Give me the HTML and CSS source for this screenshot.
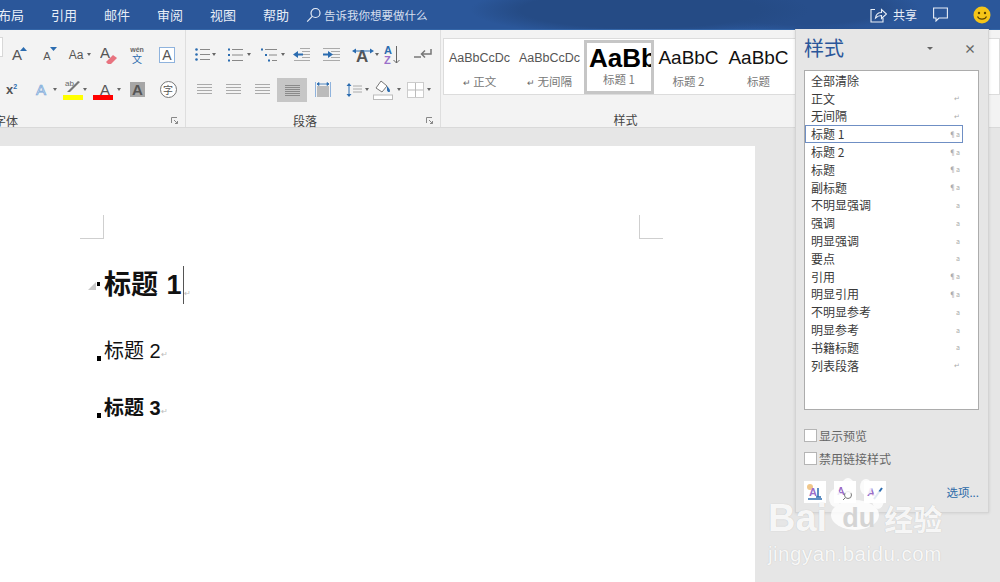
FILE: index.html
```html
<!DOCTYPE html>
<html lang="zh-CN">
<head>
    <meta charset="UTF-8">
    <title>样式</title>
    <link rel="stylesheet" href="styles.css">
</head>
<body>
    <div class="titlebar">
        <nav class="menu">
            <span>布局</span><span>引用</span><span>邮件</span><span>审阅</span><span>视图</span><span>帮助</span>
        </nav>
        <div class="tell-me">
            <svg width="15" height="16" viewBox="0 0 15 16" fill="none" stroke="#e8eef7" stroke-width="1.2"><circle cx="9.5" cy="6" r="4.5"/><path d="M6.2 9.4 1.2 14.6"/></svg>
            <span>告诉我你想要做什么</span>
        </div>
        <div class="title-right">
            <svg width="17" height="16" viewBox="0 0 17 16" fill="none" stroke="#e8eef7" stroke-width="1.1"><path d="M5 2.5H1v12.5h12v-4"/><path d="M5.5 11c.5-3.5 3-5.5 6-5.5V2.500l5 4.500-5 4.500V8.500c-2.500 0-4.500 1-6 2.500z"/></svg>
            <span class="share">共享</span>
            <svg class="comment" width="15" height="15" viewBox="0 0 15 15" fill="none" stroke="#e8eef7" stroke-width="1.1"><path d="M.6 1h13.800v10H6l-3 3v-3H.6z"/></svg>
            <svg class="smiley" width="18" height="18" viewBox="0 0 18 18"><circle cx="9" cy="9" r="8.500" fill="#f5c518"/><circle cx="6" cy="7" r="1.200" fill="#5a4300"/><circle cx="12" cy="7" r="1.200" fill="#5a4300"/><path d="M4.500 10.500c1.500 3.500 7.500 3.500 9 0" fill="none" stroke="#5a4300" stroke-width="1.100"/></svg>
        </div>
    </div>

    <div class="ribbon">
        <section class="group group-font">
            <div class="row">
                <i class="size-box"></i>
                <div class="cell"><span class="ltr">A</span><svg class="up" width="7" height="4" viewBox="0 0 7 4"><path d="M0 4 3.500 0 7 4z" fill="#2b6cb0"/></svg></div>
                <div class="cell"><span class="ltr small">A</span><svg class="up" width="7" height="4" viewBox="0 0 7 4"><path d="M0 0 3.500 4 7 0z" fill="#2b6cb0"/></svg></div>
                <div class="cell"><span class="aa">Aa</span><b class="caret"></b></div>
                <div class="cell">
                    <svg class="eraser" width="20" height="20" viewBox="0 0 20 20"><text x="0" y="13" class="svg-a">A</text><path d="M6 17l7-7 4 3-6 6H8z" fill="#e8737f"/></svg>
                </div>
                <div class="cell wen"><span class="wen-top">wén</span><span class="wen-bottom">文</span></div>
                <div class="cell"><span class="ltr boxed">A</span></div>
            </div>
            <div class="row row-font2">
                <div class="cell w25"><span class="sup">x<sup>2</sup></span></div>
                <div class="cell w34"><span class="ltr outline">A</span><b class="caret"></b></div>
                <div class="cell w30">
                    <span class="swatch-letter">ab</span><svg class="pen" width="14" height="13" viewBox="0 0 14 13"><path d="M1 12 12 1l2 1L4 12z" fill="#777"/></svg><i class="bar bar-yellow"></i><b class="caret"></b>
                </div>
                <div class="cell w34"><span class="ltr">A</span><i class="bar bar-red"></i><b class="caret"></b></div>
                <div class="cell w31"><span class="ltr shaded">A</span></div>
                <div class="cell"><span class="circled">字</span></div>
            </div>
            <div class="group-label">
                <span class="label-clipped">字体</span>
                <svg class="launcher" width="7" height="7" viewBox="0 0 7 7" fill="none" stroke="#888"><path d="M.5 6V.5H6"/><path d="M3 3l3.500 3.500M6.500 4v2.500H4"/></svg>
            </div>
        </section>

        <section class="group group-para">
            <div class="row para1">
                <div class="cell w30">
                    <svg width="15" height="13" viewBox="0 0 15 13"><g fill="#2b6cb0"><circle cx="1.500" cy="1.500" r="1.300"/><circle cx="1.500" cy="6.500" r="1.300"/><circle cx="1.500" cy="11.500" r="1.300"/></g><path d="M5 1.500h10M5 6.500h10M5 11.500h10" stroke="#888"/></svg><b class="caret"></b>
                </div>
                <div class="cell w35">
                    <svg width="16" height="14" viewBox="0 0 16 14"><path d="M1 1.500h2M1 7h2M1 12.500h2" stroke="#2b6cb0" stroke-width="2"/><path d="M5 1.500h11M5 7h11M5 12.500h11" stroke="#888"/></svg><b class="caret"></b>
                </div>
                <div class="cell w34">
                    <svg width="16" height="14" viewBox="0 0 16 14"><path d="M0 1.500h2M4 7h2M7 12.500h2" stroke="#2b6cb0" stroke-width="2"/><path d="M4 1.500h12M8 7h8M11 12.500h5" stroke="#888"/></svg><b class="caret"></b>
                </div>
                <div class="cell w31">
                    <svg width="17" height="13" viewBox="0 0 17 13"><path d="M7 1h10M9 4h8M9 7h8M9 10h8M1 13h16" stroke="#aaa" transform="translate(0 -.5)"/><path d="M0 6.500 5 3v2.500h5v2H5V10z" fill="#2b6cb0"/></svg>
                </div>
                <div class="cell w29">
                    <svg width="17" height="13" viewBox="0 0 17 13"><path d="M0 1h17M8 4h9M8 7h9M8 10h9M0 13h17" stroke="#aaa" transform="translate(0 -.5)"/><path d="M10 6.500 5 3v2.500H0v2h5V10z" fill="#2b6cb0"/></svg>
                </div>
                <div class="cell w34">
                    <svg width="22" height="14" viewBox="0 0 22 14"><text x="4" y="14" class="svg-a big">A</text><path d="M0 3l4-2.500v5zM22 3 18 .5v5z" fill="#2b6cb0"/><path d="M3 3h16" stroke="#2b6cb0"/></svg><b class="caret"></b>
                </div>
                <div class="cell w24">
                    <svg width="16" height="20" viewBox="0 0 16 20"><text x="0" y="9" class="svg-sort blue">A</text><text x="0" y="19" class="svg-sort purple">Z</text><path d="M12.500 1v17M9.500 15l3 3 3-3" fill="none" stroke="#666"/></svg>
                </div>
                <div class="cell w38">
                    <svg width="18" height="14" viewBox="0 0 18 14" fill="none" stroke="#777" stroke-width="1.500"><path d="M17 1v5H8M11 2.500 7.500 6 11 9.500"/><path d="M0 9h7"/></svg>
                </div>
            </div>
            <div class="row para2">
                <div class="cell w29"><i class="lines left"></i></div>
                <div class="cell w29"><i class="lines center"></i></div>
                <div class="cell w29"><i class="lines right"></i></div>
                <div class="cell w30 selected"><i class="lines dark"></i></div>
                <div class="cell w31">
                    <svg width="16" height="15" viewBox="0 0 16 15"><path d="M.5 0v15M15.500 0v15" stroke="#8fb3dd"/><rect x="2" y="4" width="12" height="11" fill="#bbb"/><path d="M2 2h12M2 2l2-1.500v3zM14 2l-2-1.500v3z" stroke="#2b6cb0" fill="#2b6cb0" stroke-width=".8"/></svg>
                </div>
                <div class="cell w32">
                    <svg width="16" height="16" viewBox="0 0 16 16"><path d="M3 1 .5 4h5zM3 15 .5 12h5z" fill="#2b6cb0"/><path d="M3 3v10" stroke="#2b6cb0"/><path d="M7 4h9M7 7h9M7 10h9" stroke="#aaa"/></svg><b class="caret"></b>
                </div>
                <div class="cell w32 nudge-fill">
                    <svg width="20" height="20" viewBox="0 0 20 20"><path d="M8 1 14 6l-5 6-6-4z" fill="#fff" stroke="#777"/><path d="M14 6c1 1 3 3 3 5s-3 1-3-1z" fill="#2b6cb0"/><rect x=".5" y="15" width="19" height="4.500" fill="#fff" stroke="#bbb"/></svg><b class="caret"></b>
                </div>
                <div class="cell w30 nudge-table">
                    <svg width="17" height="16" viewBox="0 0 17 16"><rect x=".5" y=".5" width="16" height="15" fill="#fff" stroke="#ccc"/><path d="M8.500 1v14M1 8h15" stroke="#bbb"/></svg><b class="caret"></b>
                </div>
            </div>
            <div class="group-label para-label">
                <span class="label-center">段落</span>
                <svg class="launcher" width="7" height="7" viewBox="0 0 7 7" fill="none" stroke="#888"><path d="M.5 6V.5H6"/><path d="M3 3l3.500 3.500M6.500 4v2.500H4"/></svg>
            </div>
        </section>

        <section class="group group-styles">
            <div class="gallery">
                <div class="style-item"><div class="preview">AaBbCcDc</div><div class="style-name"><em>↵</em> 正文</div></div>
                <div class="style-item"><div class="preview">AaBbCcDc</div><div class="style-name"><em>↵</em> 无间隔</div></div>
                <div class="style-item current"><div class="preview h1">AaBb</div><div class="style-name">标题 1</div></div>
                <div class="style-item"><div class="preview h2">AaBbC</div><div class="style-name">标题 2</div></div>
                <div class="style-item"><div class="preview h2">AaBbC</div><div class="style-name">标题</div></div>
            </div>
            <div class="group-label styles-label"><span class="label-center">样式</span></div>
        </section>
    </div>

    <main class="workspace">
        <div class="page">
            <div class="crop-row">
                <i class="crop crop-left"></i>
                <i class="crop crop-right"></i>
            </div>
            <div class="heading heading-1">
                <span class="gutter"><svg class="collapse" width="8" height="8" viewBox="0 0 8 8"><path d="M8 0v8H0z" fill="#c9c9c9"/></svg><i class="dot"></i></span>
                <h1>标题 1</h1><i class="caret-line"></i><em class="pilcrow">↵</em>
            </div>
            <div class="heading heading-2">
                <span class="gutter"><i class="dot"></i></span>
                <h2>标题 2</h2><em class="pilcrow">↵</em>
            </div>
            <div class="heading heading-3">
                <span class="gutter"><i class="dot"></i></span>
                <h3>标题 3</h3><em class="pilcrow">↵</em>
            </div>
        </div>
    </main>

    <aside class="styles-pane">
        <header class="pane-head">
            <span class="pane-title">样式</span>
            <b class="pane-drop"></b>
            <span class="pane-close">×</span>
        </header>
        <ul class="style-list">
            <li>全部清除</li>
            <li>正文<em>↵</em></li>
            <li>无间隔<em>↵</em></li>
            <li class="active">标题 1<em>¶a</em></li>
            <li>标题 2<em>¶a</em></li>
            <li>标题<em>¶a</em></li>
            <li>副标题<em>¶a</em></li>
            <li>不明显强调<em>a</em></li>
            <li>强调<em>a</em></li>
            <li>明显强调<em>a</em></li>
            <li>要点<em>a</em></li>
            <li>引用<em>¶a</em></li>
            <li>明显引用<em>¶a</em></li>
            <li>不明显参考<em>a</em></li>
            <li>明显参考<em>a</em></li>
            <li>书籍标题<em>a</em></li>
            <li>列表段落<em>↵</em></li>
        </ul>
        <label class="check"><i></i>显示预览</label>
        <label class="check"><i></i>禁用链接样式</label>
        <div class="pane-foot">
            <button class="pane-btn">
                <svg width="18" height="18" viewBox="0 0 18 18"><circle cx="4" cy="4" r="3" fill="#f0c68a"/><text x="3" y="13" class="svg-sort purple">A</text><path d="M12 5v9M10 14h5M2 16h14" stroke="#2b6cb0" stroke-width="1.500"/></svg>
            </button>
            <button class="pane-btn">
                <svg width="18" height="18" viewBox="0 0 18 18"><text x="1" y="12" class="svg-sort purple">A</text><circle cx="12" cy="12" r="3.500" fill="none" stroke="#777"/><path d="M9 15l-2 2" stroke="#777"/></svg>
            </button>
            <button class="pane-btn">
                <svg width="18" height="18" viewBox="0 0 18 18"><text x="1" y="13" class="svg-sort purple">A</text><path d="M8 16 16 5" stroke="#2b6cb0" stroke-width="2"/></svg>
            </button>
            <a class="options">选项...</a>
        </div>
    </aside>

    <div class="watermark">
        <svg class="paw" width="60" height="54" viewBox="0 0 60 54" fill="#fff"><ellipse cx="8" cy="20" rx="6" ry="9"/><ellipse cx="21" cy="8" rx="6" ry="8"/><ellipse cx="39" cy="9" rx="6" ry="8"/><ellipse cx="51" cy="22" rx="6" ry="9"/><ellipse cx="28" cy="37" rx="24" ry="15"/></svg>
        <div class="wm-main"><span class="wm-bai">Bai</span><span class="wm-du">du</span><span class="wm-cn">经验</span></div>
        <div class="wm-url">jingyan.baidu.com</div>
    </div>
</body>
</html>
```

FILE: styles.css
```css
* {
    box-sizing: border-box;
}
html, body {
    margin: 0;
    height: 582px;
    overflow: hidden;
}
body {
    position: relative;
    width: 1000px;
    font-family: "Noto Sans CJK SC", "Noto Sans", sans-serif;
    background: #e6e6e6;
    color: #444;
}
em {
    font-style: normal;
}

/* title bar */
.titlebar {
    display: flex;
    align-items: center;
    height: 30px;
    background:
        radial-gradient(ellipse 170px 26px at 640px 10px, #254b85 70%, transparent 100%),
        radial-gradient(ellipse 120px 24px at 800px 8px, #274e8b 70%, transparent 100%),
        #2b579a;
    color: #e8eef7;
    font-size: 13px;
    border-bottom: 1px solid #3466a8;
}
.menu {
    display: flex;
    gap: 27px;
    margin-left: -2px;
}
.tell-me {
    display: flex;
    align-items: center;
    gap: 3px;
    margin-left: 17px;
    font-size: 11.5px;
    color: #d5dfee;
}
.title-right {
    display: flex;
    align-items: center;
    margin-left: auto;
    padding-right: 9px;
}
.share {
    margin-left: 6px;
    font-size: 12px;
}
.comment {
    margin-left: 16px;
}
.smiley {
    margin-left: 25px;
}

/* ribbon */
.ribbon {
    display: flex;
    height: 98px;
    background: #f3f3f3;
    border-bottom: 1px solid #d9d9d9;
}
.group {
    display: flex;
    flex-direction: column;
    padding-top: 7px;
    border-right: 1px solid #dedede;
}
.group-font {
    width: 186px;
}
.group-para {
    width: 255px;
}
.group-styles {
    flex: 1;
    border-right: 0;
}
.row {
    display: flex;
    height: 35px;
}
.row-font2 {
    margin-left: -1px;
}
.para1 {
    padding-left: 1px;
}
.para2 {
    padding-left: 4px;
}
.size-box {
    width: 3px;
    height: 20px;
    margin-right: -1px;
    background: #fff;
    border: 1px solid #d8d8d8;
    border-left: 0;
}
.cell {
    position: relative;
    display: flex;
    align-items: center;
    justify-content: center;
    width: 30px;
    height: 35px;
    flex: none;
}
.w24 { width: 24px; }
.w25 { width: 25px; }
.w29 { width: 29px; }
.w30 { width: 30px; }
.w31 { width: 31px; }
.w32 { width: 32px; }
.w34 { width: 34px; }
.w35 { width: 35px; }
.w38 { width: 38px; }
.selected {
    height: 24px;
    margin-top: 6px;
    background: #c6c6c6;
}
.nudge-fill svg {
    margin-right: 6px;
}
.nudge-table svg {
    margin-right: 4px;
}
.eraser {
    margin-left: 5px;
}
.ltr {
    font-family: "Liberation Sans", sans-serif;
    font-size: 15px;
    color: #555;
    line-height: 1;
}
.ltr.small {
    font-size: 11px;
    margin-top: 3px;
}
.up {
    position: absolute;
    top: 10px;
    left: 18px;
}
.aa {
    font-family: "Liberation Sans", sans-serif;
    font-size: 12px;
    color: #555;
    margin-right: 2px;
}
.caret {
    width: 0;
    height: 0;
    margin-left: 3px;
    border: 2.5px solid transparent;
    border-top: 3px solid #666;
    border-bottom: 0;
}
.wen {
    flex-direction: column;
    line-height: 1;
}
.wen-top {
    font-family: "Liberation Sans", sans-serif;
    font-size: 7px;
    font-weight: bold;
    color: #666;
}
.wen-bottom {
    margin-top: 1px;
    font-size: 10px;
    color: #2b6cb0;
}
.boxed {
    display: block;
    width: 16px;
    height: 16px;
    line-height: 15px;
    text-align: center;
    font-size: 14px;
    background: #fff;
    border: 1px solid #8fb3dd;
}
.sup {
    font-family: "Liberation Sans", sans-serif;
    font-size: 13px;
    font-weight: bold;
    color: #555;
}
.sup sup {
    font-size: 7px;
    color: #2b6cb0;
}
.outline {
    color: #e6eff9;
    font-size: 15px;
    -webkit-text-stroke: 0.7px #7aa7d8;
}
.swatch-letter {
    position: absolute;
    top: 7px;
    left: 7px;
    font-family: "Liberation Sans", sans-serif;
    font-size: 8px;
    color: #666;
}
.pen {
    position: absolute;
    top: 8px;
    left: 8px;
}
.bar {
    position: absolute;
    top: 23px;
    left: 5px;
    width: 20px;
    height: 5px;
}
.bar-yellow { background: #ffff00; }
.bar-red { background: #ff0000; }
.cell .caret {
    position: absolute;
    right: 1px;
    top: 16px;
}
.shaded {
    width: 15px;
    height: 15px;
    line-height: 15px;
    text-align: center;
    background: #a6a6a6;
    font-weight: bold;
}
.circled {
    width: 17px;
    height: 17px;
    line-height: 15px;
    text-align: center;
    font-size: 10px;
    color: #555;
    background: #fff;
    border: 1px solid #777;
    border-radius: 50%;
}
.lines {
    display: block;
    width: 15px;
    height: 11px;
    background: repeating-linear-gradient(#aaa 0 1px, transparent 1px 3px);
}
.lines.dark {
    background: repeating-linear-gradient(#8a8a8a 0 1px, transparent 1px 2px);
}
.group-label {
    display: grid;
    grid-template-columns: 1fr auto 1fr;
    align-items: center;
    height: 16px;
    margin-top: 5px;
    font-size: 12px;
    color: #444;
}
.group-label span {
    grid-column: 2;
}
.group-label .label-clipped {
    grid-column: 1;
    margin-left: -6px;
}
.para-label {
    grid-template-columns: 107px auto 1fr;
}
.launcher {
    grid-column: 3;
    justify-self: end;
    margin-right: 7px;
}
.styles-label {
    margin-top: 16px;
    padding-right: 190px;
}

/* style gallery */
.gallery {
    display: flex;
    height: 58px;
    margin: 1px 0 0 2px;
    padding: 1px 0 0 2px;
    background: #fff;
    border: 1px solid #dcdcdc;
    overflow: hidden;
}
.style-item {
    flex: none;
    width: 67px;
    height: 54px;
    margin-right: 3px;
    overflow: hidden;
    text-align: center;
}
.style-item.current {
    border: 3px solid #c6c6c6;
    width: 70px;
    margin-left: -2px;
    margin-right: 1px;
}
.preview {
    height: 32px;
    padding-top: 6px;
    font-family: "Liberation Sans", sans-serif;
    font-size: 12.5px;
    line-height: 24px;
    color: #555;
    white-space: nowrap;
    overflow: hidden;
}
.preview.h1 {
    height: 28px;
    padding-top: 0;
    font-size: 26px;
    line-height: 30px;
    font-weight: bold;
    color: #000;
    text-align: left;
    padding-left: 2px;
}
.preview.h2 {
    font-size: 19px;
    color: #111;
}
.style-name {
    font-size: 11.5px;
    color: #777;
    line-height: 18px;
}
.style-item.current .style-name {
    line-height: 17px;
}
.style-name em {
    font-size: 9px;
    color: #666;
}

/* document */
.workspace {
    padding-top: 18px;
}
.page {
    width: 755px;
    height: 436px;
    padding-top: 69px;
    background: #fff;
}
.crop-row {
    display: flex;
    justify-content: space-between;
    width: 583px;
    margin-left: 80px;
}
.crop {
    width: 24px;
    height: 24px;
    border-bottom: 1px solid #cfcfcf;
}
.crop-left {
    border-right: 1px solid #cfcfcf;
}
.crop-right {
    border-left: 1px solid #cfcfcf;
}
.heading {
    display: flex;
    align-items: center;
    color: #111;
}
.heading h1, .heading h2, .heading h3 {
    margin: 0;
    line-height: 1;
    font-family: "Liberation Sans", "Noto Sans CJK SC", sans-serif;
}
.gutter {
    position: relative;
    flex: none;
    width: 104px;
}
.dot {
    position: absolute;
    left: 97px;
    width: 3px;
    height: 4px;
    background: #000;
}
.collapse {
    position: absolute;
    left: 88px;
    top: -3px;
}
.heading-1 {
    height: 38px;
    margin-top: 27px;
}
.heading-1 h1 {
    font-size: 27px;
    font-weight: bold;
    word-spacing: 1px;
    color: #111;
}
.heading-1 .dot {
    top: -3px;
}
.caret-line {
    width: 1px;
    height: 38px;
    margin-left: 1px;
    background: #555;
}
.pilcrow {
    align-self: flex-end;
    margin-bottom: 6px;
    font-size: 8px;
    color: #bbb;
}
.heading-2 {
    height: 28px;
    margin-top: 33px;
}
.heading-2 h2 {
    font-size: 20px;
    font-weight: normal;
}
.heading-2 .dot, .heading-3 .dot {
    top: 5px;
    height: 5px;
    width: 4px;
}
.heading-3 {
    height: 28px;
    margin-top: 29px;
}
.heading-3 h3 {
    font-size: 20px;
    font-weight: bold;
}

/* floating styles pane */
.styles-pane {
    position: absolute;
    left: 795px;
    top: 29px;
    width: 194px;
    height: 484px;
    padding: 0 9px 0 8px;
    background: #e6e6e6;
    border: 1px solid #d4d4d4;
    border-top: 0;
    box-shadow: 0 0 3px rgba(0, 0, 0, 0.12);
}
.pane-head {
    display: flex;
    align-items: center;
    height: 38px;
    margin-bottom: 3px;
}
.pane-title {
    flex: none;
    font-size: 20px;
    line-height: 1;
    color: #2b579a;
    white-space: nowrap;
}
.pane-drop {
    width: 0;
    height: 0;
    margin-left: 83px;
    border: 3px solid transparent;
    border-top: 3px solid #666;
    border-bottom: 0;
}
.pane-close {
    margin-left: 31px;
    font-size: 12px;
    font-weight: bold;
    color: #666;
}
.style-list {
    height: 340px;
    margin: 0;
    padding: 1px 0 0;
    list-style: none;
    background: #fff;
    border: 1px solid #acacac;
}
.style-list li {
    display: flex;
    justify-content: space-between;
    align-items: center;
    width: 158px;
    height: 17.8px;
    padding: 0 2px 0 5px;
    font-size: 12px;
    line-height: 1;
    color: #3a3a3a;
    border: 1px solid transparent;
}
.style-list li.active {
    border-color: #6f8fc4;
}
.style-list em {
    font-size: 7px;
    color: #aaa;
}
.check {
    display: flex;
    align-items: center;
    gap: 2px;
    height: 23px;
    font-size: 12px;
    color: #666;
}
.check i {
    width: 13px;
    height: 13px;
    background: #fff;
    border: 1px solid #b5b5b5;
}
.style-list + .check {
    margin-top: 14px;
}
.pane-foot {
    display: flex;
    align-items: center;
    gap: 8px;
    margin-top: 11px;
}
.pane-btn {
    display: flex;
    align-items: center;
    justify-content: center;
    width: 22px;
    height: 22px;
    padding: 0;
    background: #fff;
    border: 0;
}
.options {
    margin-left: auto;
    font-size: 11.5px;
    color: #2b6aa8;
}

/* watermark */
.watermark {
    position: absolute;
    left: 768px;
    top: 476px;
    width: 190px;
    color: rgba(255, 255, 255, 0.9);
    font-family: "Liberation Sans", sans-serif;
    line-height: 1;
}
.paw {
    position: absolute;
    left: 59px;
    top: 2px;
    opacity: 0.85;
}
.wm-main {
    position: relative;
    display: flex;
    align-items: center;
    height: 40px;
    margin-top: 22px;
    text-shadow: 0 0 1px #bbb;
}
.wm-bai {
    font-size: 38px;
    font-weight: bold;
}
.wm-du {
    margin-left: 15px;
    font-size: 27px;
    font-weight: bold;
    color: #d4d4d4;
    text-shadow: none;
}
.wm-cn {
    margin-left: 9px;
    font-family: "Noto Sans CJK SC", sans-serif;
    font-size: 29px;
    font-weight: bold;
}
.wm-url {
    margin-top: 6px;
    font-size: 20.5px;
    letter-spacing: 0.5px;
    text-shadow: 0 0 1px #bbb;
}

/* svg text */
.svg-a {
    font-family: "Liberation Sans", sans-serif;
    font-size: 15px;
    fill: #555;
}
.svg-a.big {
    font-size: 17px;
    font-weight: bold;
}
.svg-sort {
    font-family: "Liberation Sans", sans-serif;
    font-size: 11px;
    font-weight: bold;
}
.svg-sort.blue { fill: #2b6cb0; }
.svg-sort.purple { fill: #9a6fc9; }
```
